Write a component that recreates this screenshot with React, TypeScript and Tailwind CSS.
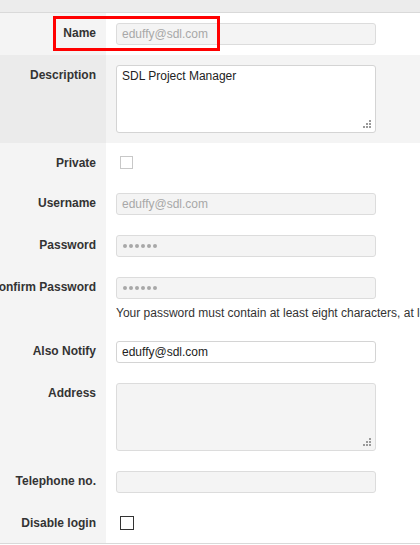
import type { ReactNode } from 'react';

// Resize grip drawn like the old-style dotted corner
function Grip() {
  return (
    <svg
      className="absolute right-[3px] bottom-[3px]"
      width="9"
      height="9"
      viewBox="0 0 9 9"
      fill="#9a9a9a"
    >
      <rect x="6" y="0" width="2" height="2" />
      <rect x="3" y="3" width="2" height="2" />
      <rect x="6" y="3" width="2" height="2" />
      <rect x="0" y="6" width="2" height="2" />
      <rect x="3" y="6" width="2" height="2" />
      <rect x="6" y="6" width="2" height="2" />
    </svg>
  );
}

function Row({
  label,
  children,
  shaded = false,
  height,
}: {
  label: string;
  children: ReactNode;
  shaded?: boolean;
  height?: string;
}) {
  return (
    <div className={`flex ${height ?? ''}`}>
      {/* label column — long labels spill off to the left like the original */}
      <div
        className={`flex w-[106px] shrink-0 items-start justify-end pr-[10px] pt-[13px] text-[12px] leading-[14px] font-bold text-[#333] whitespace-nowrap ${
          shaded ? 'bg-[#ebebeb]' : 'bg-[#f4f4f4]'
        }`}
      >
        <span className="shrink-0">{label}</span>
      </div>
      <div className={`flex-1 pl-[10px] ${shaded ? 'bg-[#f4f4f4]' : 'bg-white'}`}>{children}</div>
    </div>
  );
}

function TextBox({ value, muted = true }: { value?: string; muted?: boolean }) {
  return (
    <div
      className={`my-[10px] flex h-[22px] w-[260px] items-center rounded-[3px] border px-[5px] text-[12px] ${
        muted ? 'border-[#dcdcdc] bg-[#f4f4f4] text-[#a8a8a8]' : 'border-[#d4d4d4] bg-white text-[#222]'
      }`}
    >
      {value}
    </div>
  );
}

function Dots() {
  return (
    <div className="my-[10px] flex h-[22px] w-[260px] items-center gap-[2px] rounded-[3px] border border-[#dcdcdc] bg-[#f4f4f4] px-[6px]">
      {[0, 1, 2, 3, 4, 5].map((i) => (
        <span key={i} className="block h-[4px] w-[4px] rounded-full bg-[#a8a8a8]" />
      ))}
    </div>
  );
}

export default function App() {
  return (
    <div className="relative h-[545px] w-[420px] overflow-hidden bg-white font-['Liberation_Sans',Arial,sans-serif]">
      {/* top strip */}
      <div className="h-[13px] border-b border-[#d9d9d9] bg-[#ececec]" />

      <Row label="Name">
        <TextBox value="eduffy@sdl.com" />
      </Row>

      <Row label="Description" shaded>
        <div className="relative my-[10px] h-[68px] w-[260px] rounded-[3px] border border-[#d4d4d4] bg-white px-[5px] pt-[3px] text-[12px] leading-[14px] text-[#222]">
          SDL Project Manager
          <Grip />
        </div>
      </Row>

      <Row label="Private" height="h-[40px]">
        <div className="mt-[13px] ml-[4px] h-[13px] w-[13px] border border-[#c8c8c8] bg-white" />
      </Row>

      <Row label="Username">
        <TextBox value="eduffy@sdl.com" />
      </Row>

      <Row label="Password">
        <Dots />
      </Row>

      <Row label="Confirm Password">
        <div className="pb-[11px]">
          <div className="-mb-[3px]">
            <Dots />
          </div>
          <p className="whitespace-nowrap text-[12px] leading-[14px] text-[#333]">
            Your password must contain at least eight characters, at least one number.
          </p>
        </div>
      </Row>

      <Row label="Also Notify">
        <TextBox value="eduffy@sdl.com" muted={false} />
      </Row>

      <Row label="Address">
        <div className="relative my-[10px] h-[68px] w-[260px] rounded-[3px] border border-[#dcdcdc] bg-[#f4f4f4]">
          <Grip />
        </div>
      </Row>

      <Row label="Telephone no.">
        <TextBox />
      </Row>

      <Row label="Disable login" height="h-[40px]">
        <div className="mt-[13px] ml-[4px] h-[14px] w-[14px] border-[1.5px] border-[#333] bg-white" />
      </Row>

      <div className="border-t border-[#d9d9d9]" />

      {/* red highlight annotation over the Name field */}
      <div className="pointer-events-none absolute top-[16px] left-[53px] h-[35px] w-[167px] border-[3px] border-[#ff0000]" />
    </div>
  );
}
